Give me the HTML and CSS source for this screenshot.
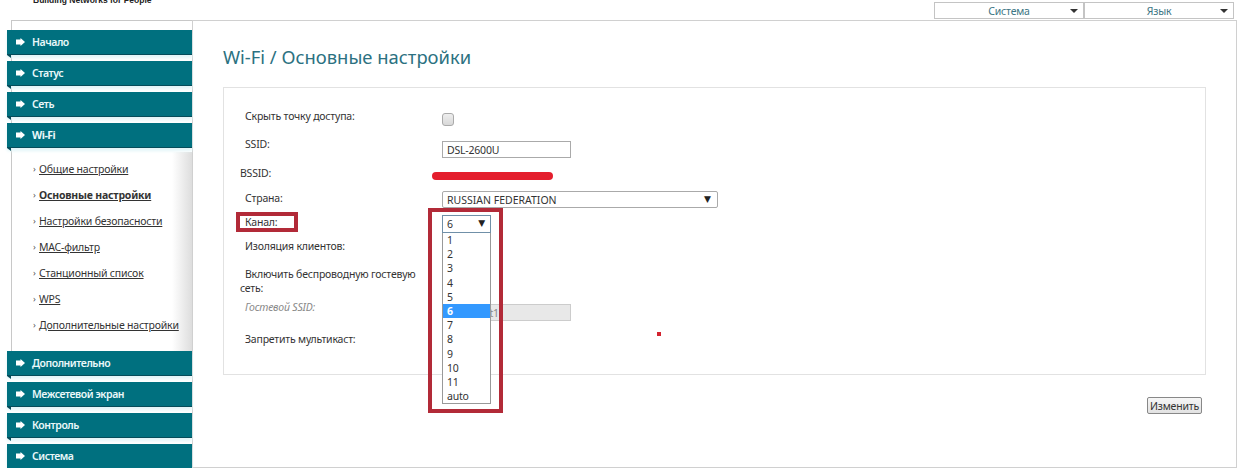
FILE: index.html
```html
<!DOCTYPE html>
<html lang="ru">

<head>
    <meta charset="UTF-8">
    <title>Wi-Fi / Основные настройки</title>
    <link rel="stylesheet" href="styles.css">
</head>

<body>
    <div class="header">
        <div class="logo"><span>Building Networks for People</span></div>
        <div class="top-menu">
            <div class="top-item">Система<span class="top-arrow"></span></div>
            <div class="top-item">Язык<span class="top-arrow"></span></div>
        </div>
    </div>

    <div class="layout">
        <div class="side">
            <div class="side-box">
                <a class="nav"><svg class="nav-icon" viewBox="0 0 9 8"><path d="M0 1.5h4.5V0L9 4 4.5 8V6.5H0z" /></svg>Начало</a>
                <a class="nav"><svg class="nav-icon" viewBox="0 0 9 8"><path d="M0 1.5h4.5V0L9 4 4.5 8V6.5H0z" /></svg>Статус</a>
                <a class="nav"><svg class="nav-icon" viewBox="0 0 9 8"><path d="M0 1.5h4.5V0L9 4 4.5 8V6.5H0z" /></svg>Сеть</a>
                <a class="nav nav-open"><svg class="nav-icon" viewBox="0 0 9 8"><path d="M0 1.5h4.5V0L9 4 4.5 8V6.5H0z" /></svg>Wi-Fi</a>
                <ul class="sub">
                    <li><a>Общие настройки</a></li>
                    <li class="current"><a>Основные настройки</a></li>
                    <li><a>Настройки безопасности</a></li>
                    <li><a>MAC-фильтр</a></li>
                    <li><a>Станционный список</a></li>
                    <li><a>WPS</a></li>
                    <li><a>Дополнительные настройки</a></li>
                </ul>
            </div>
            <a class="nav"><svg class="nav-icon" viewBox="0 0 9 8"><path d="M0 1.5h4.5V0L9 4 4.5 8V6.5H0z" /></svg>Дополнительно</a>
            <a class="nav"><svg class="nav-icon" viewBox="0 0 9 8"><path d="M0 1.5h4.5V0L9 4 4.5 8V6.5H0z" /></svg>Межсетевой экран</a>
            <a class="nav"><svg class="nav-icon" viewBox="0 0 9 8"><path d="M0 1.5h4.5V0L9 4 4.5 8V6.5H0z" /></svg>Контроль</a>
            <a class="nav"><svg class="nav-icon" viewBox="0 0 9 8"><path d="M0 1.5h4.5V0L9 4 4.5 8V6.5H0z" /></svg>Система</a>
        </div>

        <div class="main">
            <h1 class="title">Wi-Fi / Основные настройки</h1>

            <div class="card">
                <div class="row row-hide">
                    <label class="indent">Скрыть точку доступа:</label>
                    <div><input class="check" type="checkbox"></div>
                </div>
                <div class="row row-ssid">
                    <label class="indent">SSID:</label>
                    <div><input class="field" type="text" value="DSL-2600U"></div>
                </div>
                <div class="row row-bssid">
                    <label>BSSID:</label>
                    <div></div>
                </div>
                <div class="row row-short">
                    <label class="indent">Страна:</label>
                    <div class="select select-wide">RUSSIAN FEDERATION<span class="select-arrow">▼</span></div>
                </div>
                <div class="row row-short">
                    <label class="indent">Канал:</label>
                    <div></div>
                </div>
                <div class="row row-isolate">
                    <label class="indent">Изоляция клиентов:</label>
                    <div></div>
                </div>
                <div class="row row-guest">
                    <label class="guest-label">Включить беспроводную гостевую сеть:</label>
                    <div></div>
                </div>
                <div class="row row-guest-ssid">
                    <label class="indent muted">Гостевой SSID:</label>
                    <div><input class="field field-off" type="text" value="DSLGuest1" disabled></div>
                </div>
                <div class="row">
                    <label class="indent">Запретить мультикаст:</label>
                    <div></div>
                </div>

                <!-- красные пометки поверх скриншота -->
                <div class="mark-line"></div>
                <div class="mark-box mark-label"></div>
                <div class="mark-box mark-list"></div>
                <div class="mark-dot"></div>

                <div class="channel">
                    <div class="channel-head">6<span class="select-arrow">▼</span></div>
                    <ul class="channel-list">
                        <li>1</li>
                        <li>2</li>
                        <li>3</li>
                        <li>4</li>
                        <li>5</li>
                        <li class="picked">6</li>
                        <li>7</li>
                        <li>8</li>
                        <li>9</li>
                        <li>10</li>
                        <li>11</li>
                        <li>auto</li>
                    </ul>
                </div>
            </div>

            <div class="actions">
                <button class="btn">Изменить</button>
            </div>
        </div>
    </div>
</body>

</html>
```

FILE: styles.css
```css
body {
    margin: 0;
    background: #fff;
    font-family: "Noto Sans", "DejaVu Sans", sans-serif;
    font-size: 10.5px;
    letter-spacing: -0.2px;
    line-height: 14px;
    color: #333;
    overflow: hidden;
}

.header {
    display: flex;
    justify-content: space-between;
    height: 20px;
}

.logo {
    display: flex;
    align-items: flex-end;
    height: 7px;
    margin-left: 33px;
    overflow: hidden;
    font-family: "Liberation Sans", sans-serif;
    font-weight: bold;
    font-size: 8.5px;
    letter-spacing: 0;
    color: #222;
}

.top-menu {
    display: flex;
    margin: 2px 6px 0 0;
    height: 17px;
}

.top-item {
    position: relative;
    box-sizing: border-box;
    width: 150px;
    height: 17px;
    border: 1px solid #c4c4c4;
    text-align: center;
    line-height: 16px;
    color: #3d7684;
}

.top-arrow {
    position: absolute;
    right: 5px;
    top: 6px;
    border-left: 4px solid transparent;
    border-right: 4px solid transparent;
    border-top: 4px solid #333;
}

.layout {
    display: flex;
    height: 448px;
}

.side {
    box-sizing: border-box;
    width: 181px;
    margin-left: 11px;
    border-top: 1px solid #c8c8c8;
}

.side-box {
    box-sizing: border-box;
    height: 330px;
    padding-top: 9px;
    border-left: 1px solid #c8c8c8;
}

.nav {
    position: relative;
    display: flex;
    align-items: center;
    box-sizing: border-box;
    width: 185px;
    height: 25px;
    margin: 0 0 6px -4px;
    padding-left: 9px;
    background: #00707f;
    border-bottom: 1px solid #044c5a;
    box-shadow: 0 3px 3px #e2f5f8;
    color: #eaf8fa;
    letter-spacing: -0.45px;
    font-weight: 600;
}

.side-box .nav {
    margin-left: -5px;
}

.nav-open {
    font-weight: bold;
}

.nav::after {
    content: "";
    position: absolute;
    left: 0;
    top: 25px;
    border-top: 3px solid #044c5a;
    border-left: 4px solid transparent;
}

.nav-icon {
    width: 9px;
    height: 8px;
    margin-right: 7px;
    fill: #fff;
}

.sub {
    list-style: none;
    box-sizing: border-box;
    height: 200px;
    margin: -2px 0 0;
    padding: 4px 0 0 27px;
    background: linear-gradient(to right, #fff 160px, #ddd 180px);
}

.sub li {
    position: relative;
    height: 26px;
    line-height: 26px;
    white-space: nowrap;
}

.sub li::before {
    content: "›";
    position: absolute;
    left: -6px;
    font-size: 9px;
    color: #555;
}

.sub a {
    color: #333;
    text-decoration: underline;
}

.sub .current a {
    font-weight: bold;
}

.main {
    box-sizing: border-box;
    width: 1045px;
    height: 448px;
    padding: 25px 30px 0;
    border: 1px solid #d0d0d0;
    background: #fff;
}

.title {
    margin: 0 0 19px;
    font-size: 18.4px;
    letter-spacing: 0;
    line-height: 22px;
    font-weight: normal;
    color: #2c7181;
}

.card {
    position: relative;
    box-sizing: border-box;
    height: 288px;
    padding: 21px 16px 0;
    border: 1px solid #e2e2e2;
}

.row {
    display: grid;
    grid-template-columns: 202px 1fr;
    height: 24px;
}

.row-hide {
    height: 28px;
}

.row-ssid {
    height: 29px;
}

.row-bssid {
    height: 25px;
}

.row-isolate {
    height: 28px;
}

.row-guest {
    height: 33px;
}

.row-guest-ssid {
    height: 32px;
}

.indent {
    padding-left: 5px;
}

.guest-label {
    max-width: 185px;
    text-indent: 5px;
}

.muted {
    color: #888;
    font-style: italic;
}

.check {
    appearance: none;
    display: block;
    width: 12px;
    height: 13px;
    margin: 4px 0 0;
    background: linear-gradient(#eee, #d8d8d8);
    border: 1px solid #aaa;
    border-radius: 3px;
}

.field {
    display: block;
    box-sizing: border-box;
    width: 129px;
    height: 17px;
    margin: 4px 0 0;
    padding: 1px 4px;
    border: 1px solid #aaa;
    font: inherit;
    letter-spacing: inherit;
    color: #333;
}

.field-off {
    background: #e8e8e8;
    border-color: #ccc;
    color: #888;
}

.select {
    position: relative;
    box-sizing: border-box;
    height: 17px;
    padding: 1px 4px;
    border: 1px solid #aaa;
    background: #fff;
    letter-spacing: 0;
}

.select-wide {
    width: 276px;
    border-radius: 2px;
}

.select-arrow {
    position: absolute;
    right: 6px;
    top: 0;
    font-size: 9px;
    color: #222;
}

.channel {
    position: absolute;
    left: 218px;
    top: 127px;
    width: 49px;
}

.channel-head {
    position: relative;
    box-sizing: border-box;
    height: 18px;
    padding: 1px 4px;
    border: 1px solid #7090a8;
    background: #fff;
}

.channel-head .select-arrow {
    right: 5px;
    top: 0;
}

.channel-list {
    list-style: none;
    box-sizing: border-box;
    height: 171px;
    margin: 0;
    padding: 0;
    border: 1px solid #999;
    border-top: 0;
    background: #fff;
}

.channel-list li {
    height: 14.2px;
    line-height: 14px;
    padding-left: 4px;
}

.channel-list .picked {
    background: #3399ff;
    color: #fff;
    font-weight: bold;
}

.mark-line {
    position: absolute;
    left: 208px;
    top: 84px;
    width: 121px;
    height: 8px;
    border-radius: 4px;
    background: #e41e2d;
}

.mark-box {
    position: absolute;
    box-sizing: border-box;
    border: 4px solid #b22a38;
}

.mark-label {
    left: 12px;
    top: 124px;
    width: 62px;
    height: 20px;
}

.mark-list {
    left: 204px;
    top: 120px;
    width: 75px;
    height: 205px;
    z-index: 1;
}

.mark-dot {
    position: absolute;
    left: 433px;
    top: 244px;
    width: 4px;
    height: 4px;
    background: #d3232f;
}

.actions {
    display: flex;
    justify-content: flex-end;
    margin: 22px 4px 0 0;
}

.btn {
    box-sizing: border-box;
    width: 55px;
    height: 17px;
    padding: 0;
    border: 1px solid #888;
    border-radius: 2px;
    background: linear-gradient(#f6f6f6, #e2e2e2);
    font: inherit;
    letter-spacing: inherit;
    color: #333;
}
```
